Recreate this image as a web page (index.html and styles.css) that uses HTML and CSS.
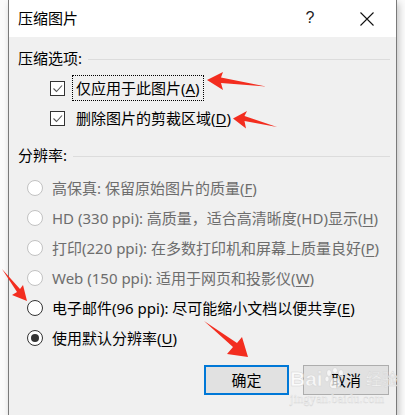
FILE: index.html
```html
<!DOCTYPE html>
<html lang="zh-CN">
<head>
<meta charset="utf-8">
<title>压缩图片</title>
<link rel="stylesheet" href="styles.css">
</head>
<body>
<div class="dialog">
  <div class="titlebar">
    <div class="title">压缩图片</div>
    <div class="tb-btn help">?</div>
    <div class="tb-btn close">
      <svg width="14" height="14" viewBox="0 0 14 14"><path d="M0.5 0.5 L13.5 13.5 M13.5 0.5 L0.5 13.5" stroke="#111" stroke-width="1.1" fill="none"/></svg>
    </div>
  </div>
  <div class="body">
    <div class="group-head"><span>压缩选项:</span><span class="rule"></span></div>
    <div class="checks">
      <div class="row check-row">
        <span class="checkbox"><svg width="13" height="13" viewBox="0 0 13 13"><path d="M2.5 6.5 L5.5 9.5 L11 3.5" stroke="#555" stroke-width="1.1" fill="none"/></svg></span>
        <span class="label focus">仅应用于此图片(<u>A</u>)</span>
      </div>
      <div class="row check-row">
        <span class="checkbox"><svg width="13" height="13" viewBox="0 0 13 13"><path d="M2.5 6.5 L5.5 9.5 L11 3.5" stroke="#555" stroke-width="1.1" fill="none"/></svg></span>
        <span class="label">删除图片的剪裁区域(<u>D</u>)</span>
      </div>
    </div>
    <div class="group-head second"><span>分辨率:</span><span class="rule"></span></div>
    <div class="radios">
      <div class="row radio-row disabled"><span class="radio"></span><span class="label">高保真: 保留原始图片的质量(<u>F</u>)</span></div>
      <div class="row radio-row disabled"><span class="radio"></span><span class="label">HD (330 ppi): 高质量，适合高清晰度(HD)显示(<u>H</u>)</span></div>
      <div class="row radio-row disabled"><span class="radio"></span><span class="label">打印(220 ppi): 在多数打印机和屏幕上质量良好(<u>P</u>)</span></div>
      <div class="row radio-row disabled"><span class="radio"></span><span class="label">Web (150 ppi): 适用于网页和投影仪(<u>W</u>)</span></div>
      <div class="row radio-row"><span class="radio"></span><span class="label">电子邮件(96 ppi): 尽可能缩小文档以便共享(<u>E</u>)</span></div>
      <div class="row radio-row"><span class="radio selected"></span><span class="label">使用默认分辨率(<u>U</u>)</span></div>
    </div>
    <div class="footer">
      <div class="btn primary">确定</div>
      <div class="btn">取消</div>
    </div>
  </div>
</div>

<div class="watermark">
  <div class="wm-top"><span class="wm-bai">Bai</span><svg class="paw" width="22" height="24" viewBox="0 0 22 24"><g fill="rgba(255,255,255,0.7)" stroke="#dadada" stroke-width="1"><ellipse cx="5" cy="6" rx="2.5" ry="3.5"/><ellipse cx="11" cy="3.5" rx="2.5" ry="3"/><ellipse cx="17" cy="6" rx="2.5" ry="3.5"/><ellipse cx="3" cy="12" rx="2.2" ry="3"/><path d="M11 11 C6 11 4 19 7 21 C9 22 13 22 15 21 C18 19 16 11 11 11 Z"/></g></svg><span class="wm-jy">经验</span></div>
  <div class="wm-url">jingyan.baidu.com</div>
</div>

<svg class="arrows" width="405" height="415" viewBox="0 0 405 415">
  <g fill="#f32d1f">
    <polygon points="207,80 223,72 221,77.5 266,86.5 221,83 223,90"/>
    <polygon points="233,118.5 247,111 244.5,116 277,127 244.5,121 246,128.5"/>
    <polygon points="27,301 23,285 20,289 2,269 17,292 12,295"/>
    <polygon points="248,357 242,337 237,343 204,321 233,347 227,354"/>
  </g>
</svg>
</body>
</html>
```
FILE: styles.css
```css
html, body {
  margin: 0;
  padding: 0;
}
body {
  width: 405px;
  height: 415px;
  overflow: hidden;
  position: relative;
  background: #fbfbfb;
  font-family: "Noto Sans", "Noto Sans CJK SC", sans-serif;
  font-size: 15px;
  color: #000;
}
.dialog {
  margin-left: 8px;
  width: 387px;
  border: 1px solid #7a7a7a;
  border-top: 0;
  background: #f0f0f0;
  box-shadow: 2px 3px 7px rgba(0, 0, 0, 0.22);
}
.titlebar {
  height: 37px;
  background: #fff;
  display: flex;
  align-items: center;
}
.title {
  flex: 1;
  padding-left: 9px;
  font-size: 15px;
  line-height: 20px;
  padding-bottom: 2px;
}
.tb-btn {
  width: 46px;
  height: 37px;
  display: flex;
  align-items: center;
  justify-content: center;
}
.help {
  margin-right: 11px;
  font-family: "Liberation Sans", sans-serif;
  font-size: 16px;
  color: #222;
  padding-bottom: 2px;
  box-sizing: border-box;
}
.close {
  margin-right: 6px;
}
.body {
  height: 357px;
  padding: 10px 6px 12px 9px;
  display: flex;
  flex-direction: column;
}
.group-head {
  height: 22px;
  display: flex;
  align-items: center;
  gap: 6px;
  line-height: 20px;
}
.group-head.second {
  margin-top: 11px;
}
.rule {
  flex: 1;
  height: 1px;
  background: #dcdcdc;
  margin-top: 2px;
}
.checks {
  margin-top: 4px;
  display: flex;
  flex-direction: column;
}
.row {
  height: 30px;
  display: flex;
  align-items: center;
  line-height: 20px;
  white-space: nowrap;
}
.check-row {
  padding-left: 32px;
}
.checkbox {
  width: 13px;
  height: 13px;
  border: 1px solid #333;
  background: #fff;
  display: flex;
}
.check-row .label {
  margin-left: 7px;
  padding: 2px 3px;
  border: 1px dotted transparent;
}
.check-row .label.focus {
  border-color: #000;
}
.radios {
  margin-top: 7px;
  display: flex;
  flex-direction: column;
}
.radio-row {
  padding-left: 9px;
}
.radio {
  width: 14px;
  height: 14px;
  border: 1px solid #333;
  border-radius: 50%;
  background: #fff;
  display: flex;
  align-items: center;
  justify-content: center;
  flex-shrink: 0;
}
.radio.selected::after {
  content: "";
  width: 8px;
  height: 8px;
  border-radius: 50%;
  background: #333;
}
.radio-row .label {
  margin-left: 9px;
}
.disabled {
  color: #6d6d6d;
}
.disabled .radio {
  border-color: #c2c2c2;
}
u {
  text-decoration-thickness: 1px;
  text-underline-offset: 2px;
}
.footer {
  margin-top: 12px;
  display: flex;
  justify-content: flex-end;
  gap: 14px;
  padding-right: 1px;
}
.btn {
  width: 84px;
  height: 28px;
  border: 1px solid #adadad;
  background: #e1e1e1;
  display: flex;
  align-items: center;
  justify-content: center;
  line-height: 20px;
}
.btn.primary {
  width: 81px;
  height: 26px;
  border: 2px solid #0078d7;
}
.watermark {
  position: absolute;
  left: 290px;
  top: 367px;
  pointer-events: none;
}
.wm-top {
  display: flex;
  align-items: center;
  height: 24px;
}
.wm-bai {
  font-family: "Liberation Sans", sans-serif;
  font-weight: bold;
  font-size: 21px;
  line-height: 24px;
  color: rgba(255, 255, 255, 0.75);
  -webkit-text-stroke: 0.5px #d6d6d6;
}
.paw {
  margin-left: 1px;
}
.wm-jy {
  margin-left: 20px;
  font-size: 16px;
  line-height: 20px;
  color: rgba(255, 255, 255, 0.75);
  -webkit-text-stroke: 0.5px #d6d6d6;
}
.wm-url {
  font-family: "Liberation Serif", serif;
  font-size: 12px;
  letter-spacing: 0.3px;
  color: rgba(255, 255, 255, 0.75);
  -webkit-text-stroke: 0.4px #d6d6d6;
  margin-top: 2px;
  line-height: 13px;
}
.arrows {
  position: absolute;
  left: 0;
  top: 0;
  pointer-events: none;
}
```
